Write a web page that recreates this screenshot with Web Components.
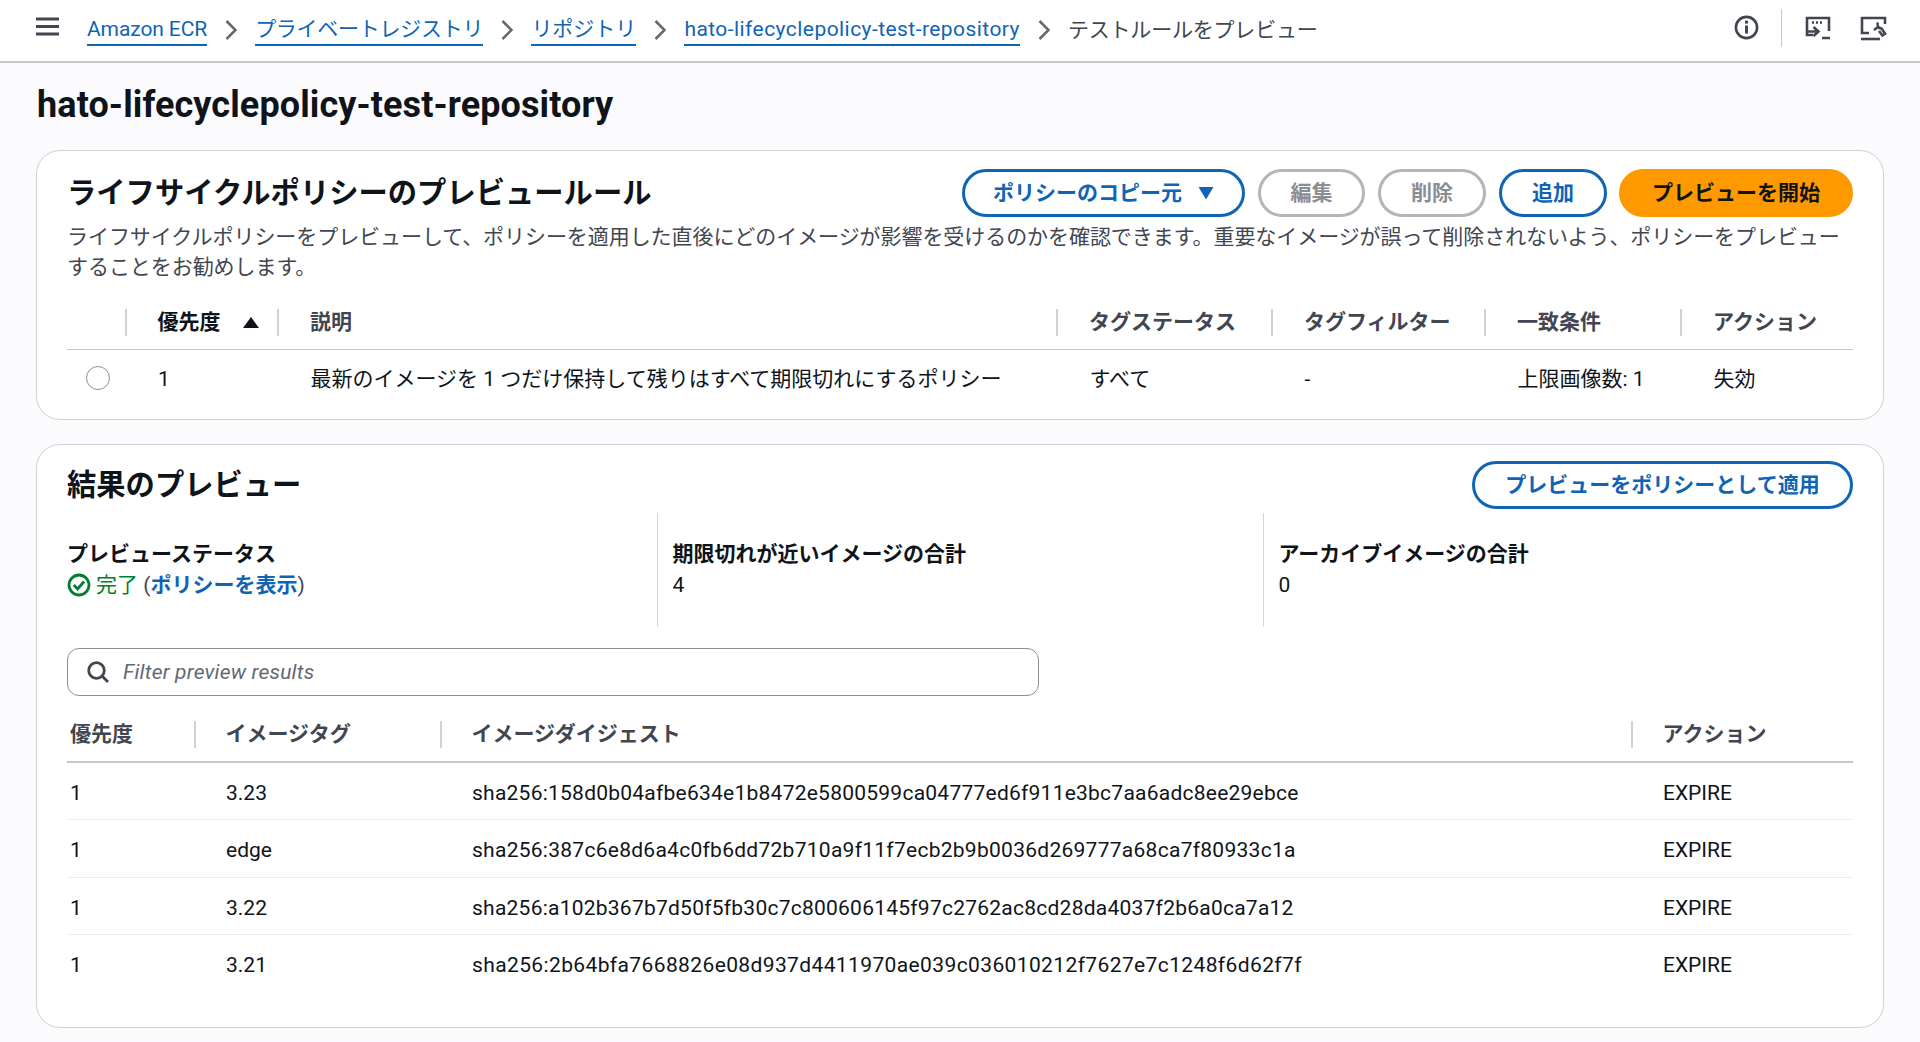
<!DOCTYPE html>
<html lang="ja"><head><meta charset="utf-8"><title>ECR</title>
<style>
html,body{margin:0;padding:0;height:100%}
body{background:#fbfbfd;font:21px/30px Roboto,"Noto Sans CJK JP",sans-serif;color:#0f141a;overflow:hidden}
</style></head><body>
<x-topbar>
  <x-crumb href="1" style="--ls:-.1px">Amazon ECR</x-crumb>
  <x-crumb href="1" style="--ls:-.25px">プライベートレジストリ</x-crumb>
  <x-crumb href="1">リポジトリ</x-crumb>
  <x-crumb href="1" style="--ls:.44px">hato-lifecyclepolicy-test-repository</x-crumb>
  <x-crumb style="--ls:-.2px">テストルールをプレビュー</x-crumb>
</x-topbar>
<x-page>
  <x-title>hato-lifecyclepolicy-test-repository</x-title>
  <x-card heading="ライフサイクルポリシーのプレビュールール" style="--card-pad:17.5px 30px 12px">
    <x-button slot="actions" kind="normal" style="width:283px">ポリシーのコピー元<svg slot="icon" width="16" height="14" viewBox="0 0 16 14"><path d="M.5 1h15L8 13.500z" fill="currentColor"/></svg></x-button>
    <x-button slot="actions" kind="disabled" style="width:107px">編集</x-button>
    <x-button slot="actions" kind="disabled" style="width:108px">削除</x-button>
    <x-button slot="actions" kind="normal" style="width:108px;margin-right:-1px">追加</x-button>
    <x-button slot="actions" kind="primary" style="width:234px">プレビューを開始</x-button>
    <x-desc>ライフサイクルポリシーをプレビューして、ポリシーを適用した直後にどのイメージが影響を受けるのかを確認できます。重要なイメージが誤って削除されないよう、ポリシーをプレビューすることをお勧めします。</x-desc>
    <x-table id="t1" style="--head-top:27px;--head-gap:13px;--hp:31px;--cp:33.5px;--rowpad:2px"></x-table>
  </x-card>
  <x-card heading="結果のプレビュー" style="--card-pad:16.5px 30px 35px">
    <x-button slot="actions" kind="normal" style="width:381px">プレビューをポリシーとして適用</x-button>
    <x-stats>
      <x-stat label="プレビューステータス"><x-status></x-status></x-stat>
      <x-stat label="期限切れが近いイメージの合計">4</x-stat>
      <x-stat label="アーカイブイメージの合計">0</x-stat>
    </x-stats>
    <x-search placeholder="Filter preview results"></x-search>
    <x-table id="t2" style="--head-top:25px;--head-gap:13px;--hp:29.5px;--cp:32px;--rowpad:3.5px"></x-table>
  </x-card>
</x-page>
<script>
function def(name,html,extra){
  const t=document.createElement('template');t.innerHTML=html;
  customElements.define(name,class extends HTMLElement{
    connectedCallback(){
      if(!this.shadowRoot){this.attachShadow({mode:'open'}).appendChild(t.content.cloneNode(true));extra&&extra.call(this,this.shadowRoot);}
    }
  });
}
def('x-topbar',`<style>
:host{display:flex;align-items:center;height:61px;box-sizing:content-box;background:#fff;border-bottom:2px solid #c6c6cd;color:#424650}
.menu{margin-left:36px;width:23px;height:19px;display:flex;flex:none;margin-top:-8px}
.crumbs{display:flex;align-items:center;margin-left:28px;flex:1;margin-top:-2px}
.icons{display:flex;align-items:center;height:38px;margin-right:33px;margin-top:-6px;color:#424650}
.sep{width:1.5px;height:38px;background:#c6c6cd;margin:0 23px 0 21.5px}
svg{display:block}
</style>
<svg class="menu" viewBox="0 0 23 19"><path d="M0 2h23M0 9.5h23M0 17h23" stroke="#424650" stroke-width="3" fill="none"/></svg>
<div class="crumbs"><slot></slot></div>
<div class="icons">
<svg width="25" height="25" viewBox="0 0 25 25"><circle cx="12.5" cy="12.5" r="10.6" fill="none" stroke="currentColor" stroke-width="2.6"/><path d="M12.5 10.5v8" stroke="currentColor" stroke-width="3"/><rect x="11" y="5.6" width="3" height="3" fill="currentColor"/></svg>
<div class="sep"></div>
<svg width="26" height="26" viewBox="0 0 26 26" fill="none" stroke="currentColor" stroke-width="2.6"><path d="M8 20H2V3h22v13"/><path d="M7 7.5h2M11 7.5h2M15 7.5h2" stroke-width="2.4"/><path d="M8.5 12l5 4.5-5 4.5"/><path d="M3 16.5h10M17 23h8"/></svg>
<svg width="28" height="26" viewBox="0 0 28 26" fill="none" stroke="currentColor" stroke-width="2.6" style="margin-left:28px"><path d="M10 18H3V3h23v6M26 20v-1"/><path d="M2 24h19"/><path d="M16 14l4-3M20 6.500a4 4 0 0 0 3.500 6l3.500 5-2.500 2-3.500-4.500" transform="translate(-1 1)"/></svg>
</div>`);
def('x-crumb',`<style>
:host{display:inline-flex;align-items:center;white-space:nowrap}
a{color:#0f64b5;text-decoration:none;border-bottom:2px solid #0f64b5;line-height:30px;display:block;letter-spacing:var(--ls,0)}
svg{margin:0 18px;display:block;flex:none}
:host(:last-child) svg{display:none}
</style><a><slot></slot></a><svg width="12" height="20" viewBox="0 0 12 20"><path d="M1.500 1l9 9-9 9" fill="none" stroke="#656871" stroke-width="2.500"/></svg>`,function(s){
  if(!this.hasAttribute('href')){s.querySelector('a').style.cssText='color:#424650;border:0';}
});
def('x-page',`<style>:host{display:flex;flex-direction:column;padding:15px 36px 0 36px}</style><slot></slot>`);
def('x-title',`<style>:host{display:block;font-weight:700;font-size:36px;line-height:54px;color:#0f141a;margin-left:1px;margin-bottom:18px;letter-spacing:.1px}</style><slot></slot>`);
def('x-card',`<style>
:host{display:block;background:#fff;border:1.5px solid #d0d0d6;border-radius:24px;margin-bottom:24px;padding:var(--card-pad);box-sizing:border-box}
.top{display:flex;align-items:center;justify-content:space-between;height:48px}
h2{margin:0;font-size:29.3px;line-height:36px;font-weight:700;color:#0f141a}
.act{display:flex;gap:13px}
</style><div class="top"><h2></h2><div class="act"><slot name="actions"></slot></div></div><slot></slot>`,function(s){s.querySelector('h2').textContent=this.getAttribute('heading')});
def('x-button',`<style>
:host{display:inline-flex;align-items:center;justify-content:center;gap:16px;height:48px;box-sizing:border-box;border-radius:30px;border:3px solid #0f64b5;color:#0f64b5;font-weight:700;white-space:nowrap;font-size:21px;background:#fff}
:host([kind=disabled]){border-color:#b4b4bb;color:#8c8c94}
:host([kind=primary]){background:#ff9900;border-color:#ff9900;color:#0f141a}
</style><slot></slot><slot name="icon"></slot>`);
def('x-desc',`<style>:host{display:block;color:#424650;margin-top:5px;letter-spacing:-.06px}</style><slot></slot>`);
def('x-table',`<style>
:host{display:block;margin-top:var(--head-top)}
.g{display:grid;grid-template-columns:var(--cols)}
.h{height:27px;line-height:27px;font-weight:700;color:#424650;padding-left:var(--hp);border-left:2.5px solid #d1d1d6;box-sizing:border-box;display:flex;align-items:center;white-space:nowrap;margin:0 0 var(--head-gap)}
.h.first{border-left:0}
.h.sorted{color:#0f141a}
.tri{margin-left:22px}
.line{grid-column:1/-1;height:1.5px;background:#c6c6cd}
.c{padding-left:var(--cp);padding-top:var(--rowpad);box-sizing:border-box;white-space:nowrap;display:flex;align-items:center}
.thin{grid-column:1/-1;height:1px;background:#ebebf0}
.radio{width:22px;height:22px;border:1.5px solid #8c8c94;border-radius:50%;background:#fff;margin-left:-20px;margin-top:-2px}
</style><div class="g"></div>`);
const tables={
 t1:{cols:'57.5px 152.5px 779px 215px 213px 196px 173px',rowH:56.5,head:['','優先度','説明','タグステータス','タグフィルター','一致条件','アクション'],sorted:1,rows:[['◯','1','最新のイメージを 1 つだけ保持して残りはすべて期限切れにするポリシー','すべて','-','上限画像数: 1','失効']],firstPad:39},
 t2:{cols:'127px 246px 1191px 222px',rowH:56.5,firstHead:3,firstPad:3,lsCol:2,ls:[.24,.27,.24,.38],head:['優先度','イメージタグ','イメージダイジェスト','アクション'],rows:[
  ['1','3.23','sha256:158d0b04afbe634e1b8472e5800599ca04777ed6f911e3bc7aa6adc8ee29ebce','EXPIRE'],
  ['1','edge','sha256:387c6e8d6a4c0fb6dd72b710a9f11f7ecb2b9b0036d269777a68ca7f80933c1a','EXPIRE'],
  ['1','3.22','sha256:a102b367b7d50f5fb30c7c800606145f97c2762ac8cd28da4037f2b6a0ca7a12','EXPIRE'],
  ['1','3.21','sha256:2b64bfa7668826e08d937d4411970ae039c036010212f7627e7c1248f6d62f7f','EXPIRE']]}
};
def('x-stats',`<style>:host{display:grid;grid-template-columns:589.5px 606px 1fr;margin-top:4px;height:114px}</style><slot></slot>`);
def('x-stat',`<style>
:host{display:block;padding:26px 0 0 15px;border-left:1.5px solid #d5d5da}
:host(:first-child){border-left:0;padding-left:0}
b{display:block;font-weight:700;line-height:30px;color:#0f141a}
.v{line-height:30px;margin-top:1px;color:#0f141a}
</style><b></b><div class="v"><slot></slot></div>`,function(s){s.querySelector('b').textContent=this.getAttribute('label')});
def('x-status',`<style>
:host{display:inline-flex;align-items:center;color:#424650}
svg{margin-right:5px;display:block}
.ok{color:#00802f}
.lnk{color:#0f64b5;font-weight:700}
</style><svg width="24" height="24" viewBox="0 0 24 24" fill="none" stroke="#00802f" stroke-width="2.8"><circle cx="12" cy="12" r="10"/><path d="M6.8 12l3.800 4 6.500-7.500"/></svg><span class="ok">完了</span><span style="white-space:pre"> (</span><span class="lnk">ポリシーを表示</span><span>)</span>`);
def('x-search',`<style>
:host{display:flex;align-items:center;width:972px;height:48px;box-sizing:border-box;margin-top:21px;border:1.5px solid #8c8c94;border-radius:12px;background:#fff}
svg{margin-left:18px;display:block}
span{margin-left:13px;font-style:italic;color:#656871;letter-spacing:.2px}
</style><svg width="24" height="24" viewBox="0 0 24 24" fill="none" stroke="#424650" stroke-width="2.8"><circle cx="10.5" cy="10.5" r="7.8"/><path d="M16 16l6 6"/></svg><span></span>`,function(s){s.querySelector('span').textContent=this.getAttribute('placeholder')});
document.querySelectorAll('x-table').forEach(el=>{
  const d=tables[el.id],g=el.shadowRoot.querySelector('.g');
  g.style.setProperty('--cols',d.cols);
  d.head.forEach((h,i)=>{
    const c=document.createElement('div');c.className='h'+(i==0?' first':'')+(d.sorted===i?' sorted':'');
    c.textContent=h;
    if(i==0&&d.firstHead!=null)c.style.paddingLeft=d.firstHead+'px';
    if(d.sorted===i)c.insertAdjacentHTML('beforeend','<svg class="tri" width="16" height="11" viewBox="0 0 16 11"><path d="M8 0l8 11H0z" fill="#0f141a"/></svg>');
    g.appendChild(c);
  });
  g.insertAdjacentHTML('beforeend','<div class="line"></div>');
  d.rows.forEach((r,ri)=>{
    if(ri)g.insertAdjacentHTML('beforeend','<div class="thin"></div>');
    r.forEach((v,i)=>{
      const c=document.createElement('div');c.className='c';c.style.height=d.rowH+'px';
      if(i==0)c.style.paddingLeft=d.firstPad+'px';
      if(d.lsCol===i)c.style.letterSpacing=d.ls[ri]+'px';
      if(v==='◯'){const o=document.createElement('div');o.className='radio';c.appendChild(o);}
      else c.textContent=v;
      g.appendChild(c);
    });
  });
});
</script>
</body></html>
